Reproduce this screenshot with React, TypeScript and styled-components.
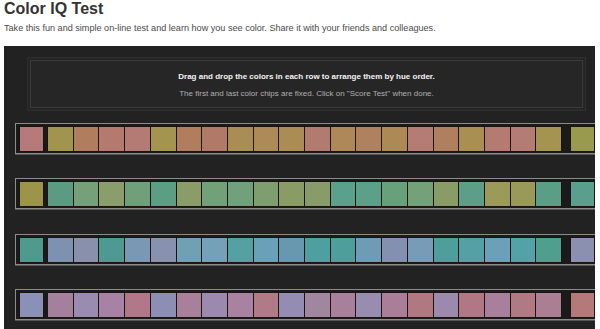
import React from "react";
import styled, { createGlobalStyle } from "styled-components";

const Global = createGlobalStyle`
  html, body { margin: 0; padding: 0; background: #ffffff; }
  body { font-family: "Liberation Sans", Arial, sans-serif; overflow: hidden; }
`;

const Page = styled.div`
  width: 600px;
  height: 329px;
  padding: 0 0 0 4px;
  box-sizing: border-box;
  overflow: hidden;
`;

const Title = styled.h1`
  margin: 0;
  font-size: 16px;
  line-height: 18px;
  font-weight: bold;
  color: #333333;
`;

const Intro = styled.p`
  margin: 4px 0 0 0;
  font-size: 9.1px;
  line-height: 12px;
  color: #4a4a4a;
`;

const Panel = styled.div`
  margin-top: 12px;
  width: 591px;
  height: 300px;
  background: #222222;
  overflow: hidden;
  padding-top: 11px;
  box-sizing: border-box;
`;

const Notice = styled.div`
  margin-left: 23px;
  width: 559px;
  height: 54px;
  box-sizing: border-box;
  background: #262626;
  border: 1px solid #2e2e2e;
  box-shadow: inset 0 0 0 2px #262626, inset 0 0 0 3px #393939;
  padding-top: 13px;
  text-align: center;
`;

const NoticeLead = styled.div`
  font-size: 8px;
  line-height: 12px;
  font-weight: bold;
  color: #f4f4f4;
`;

const NoticeNote = styled.div`
  margin-top: 4.5px;
  font-size: 8px;
  line-height: 12px;
  color: #b0b0b0;
`;

const Rows = styled.div`
  margin-top: 12px;
  margin-left: 11px;
  display: flex;
  flex-direction: column;
  gap: 24.3px;
`;

const Tray = styled.div`
  display: flex;
  align-items: center;
  width: 584px;
  box-sizing: border-box;
  padding: 2px 3px 1px 3px;
  border: 1px solid #8c8c8c;
  background: #1a1a1a;
  box-shadow: 0 1px 0 #555555;
`;

const Chip = styled.div<{ $c: string }>`
  box-sizing: border-box;
  height: 26px;
  background: ${(p) => p.$c};
  border: 1px solid #1c140e;
`;

const FixedChip = styled(Chip)`
  width: 25px;
  flex: none;
`;

const Movable = styled.div`
  display: flex;
  width: 515px;
  margin: 0 8px 0 3px;
  flex: none;
`;

const MovableChip = styled(Chip)`
  flex: 1 1 0;
  & + & {
    border-left-width: 0;
  }
`;

type Row = { first: string; chips: string[]; last: string };

const rows: Row[] = [
  {
    first: "#b67a7a",
    chips: [
      "#a0944f", "#b07d5e", "#b37a70", "#b47a74", "#a3954f",
      "#b07e5d", "#b07a68", "#a88e55", "#ad8a57", "#ab8c54",
      "#b27b70", "#ae8858", "#b0815f", "#ad8a55", "#b47c74",
      "#b0805e", "#a98f52", "#b47b73", "#b37c74", "#a49452",
    ],
    last: "#9a9a4f",
  },
  {
    first: "#9c9448",
    chips: [
      "#5c9a82", "#76a07a", "#8a9e6c", "#6fa07a", "#5c9e84",
      "#8a9c68", "#72a078", "#72a07a", "#7f9e70", "#8a9c66",
      "#889c6a", "#5aa08a", "#5ca08a", "#68a07c", "#74a07a",
      "#8a9c66", "#5c9e88", "#9c9a58", "#999a5a", "#5a9e88",
    ],
    last: "#5a9e8e",
  },
  {
    first: "#4e9a8e",
    chips: [
      "#7c92b0", "#8890ac", "#4e9a92", "#7a98b4", "#8892ae",
      "#70a0b4", "#74a0b8", "#55a0a0", "#6aa0b8", "#6898b0",
      "#4ea0a0", "#4e9e9c", "#6e9cb4", "#8490b0", "#789cb8",
      "#4e9e9c", "#54a0a4", "#6aa0b8", "#52a2a8", "#4f9e8e",
    ],
    last: "#8c90b0",
  },
  {
    first: "#8a90b8",
    chips: [
      "#a4809e", "#9a8cb0", "#a882a4", "#b07888", "#8c8eb4",
      "#a8809c", "#9c8aae", "#a882a0", "#b07a86", "#948cb2",
      "#a0869e", "#a8809c", "#988cb0", "#aa7e98", "#b07880",
      "#9c8aae", "#b07884", "#a8809c", "#b07a84", "#ac7e94",
    ],
    last: "#b47a7a",
  },
];

export default function App() {
  return (
    <Page>
      <Global />
      <Title>Color IQ Test</Title>
      <Intro>
        Take this fun and simple on-line test and learn how you see color. Share it with your
        friends and colleagues.
      </Intro>
      <Panel>
        <Notice>
          <NoticeLead>Drag and drop the colors in each row to arrange them by hue order.</NoticeLead>
          <NoticeNote>
            The first and last color chips are fixed. Click on "Score Test" when done.
          </NoticeNote>
        </Notice>
        <Rows>
          {rows.map((r, i) => (
            <Tray key={i}>
              <FixedChip $c={r.first} />
              <Movable>
                {r.chips.map((c, j) => (
                  <MovableChip key={j} $c={c} />
                ))}
              </Movable>
              <FixedChip $c={r.last} />
            </Tray>
          ))}
        </Rows>
      </Panel>
    </Page>
  );
}
